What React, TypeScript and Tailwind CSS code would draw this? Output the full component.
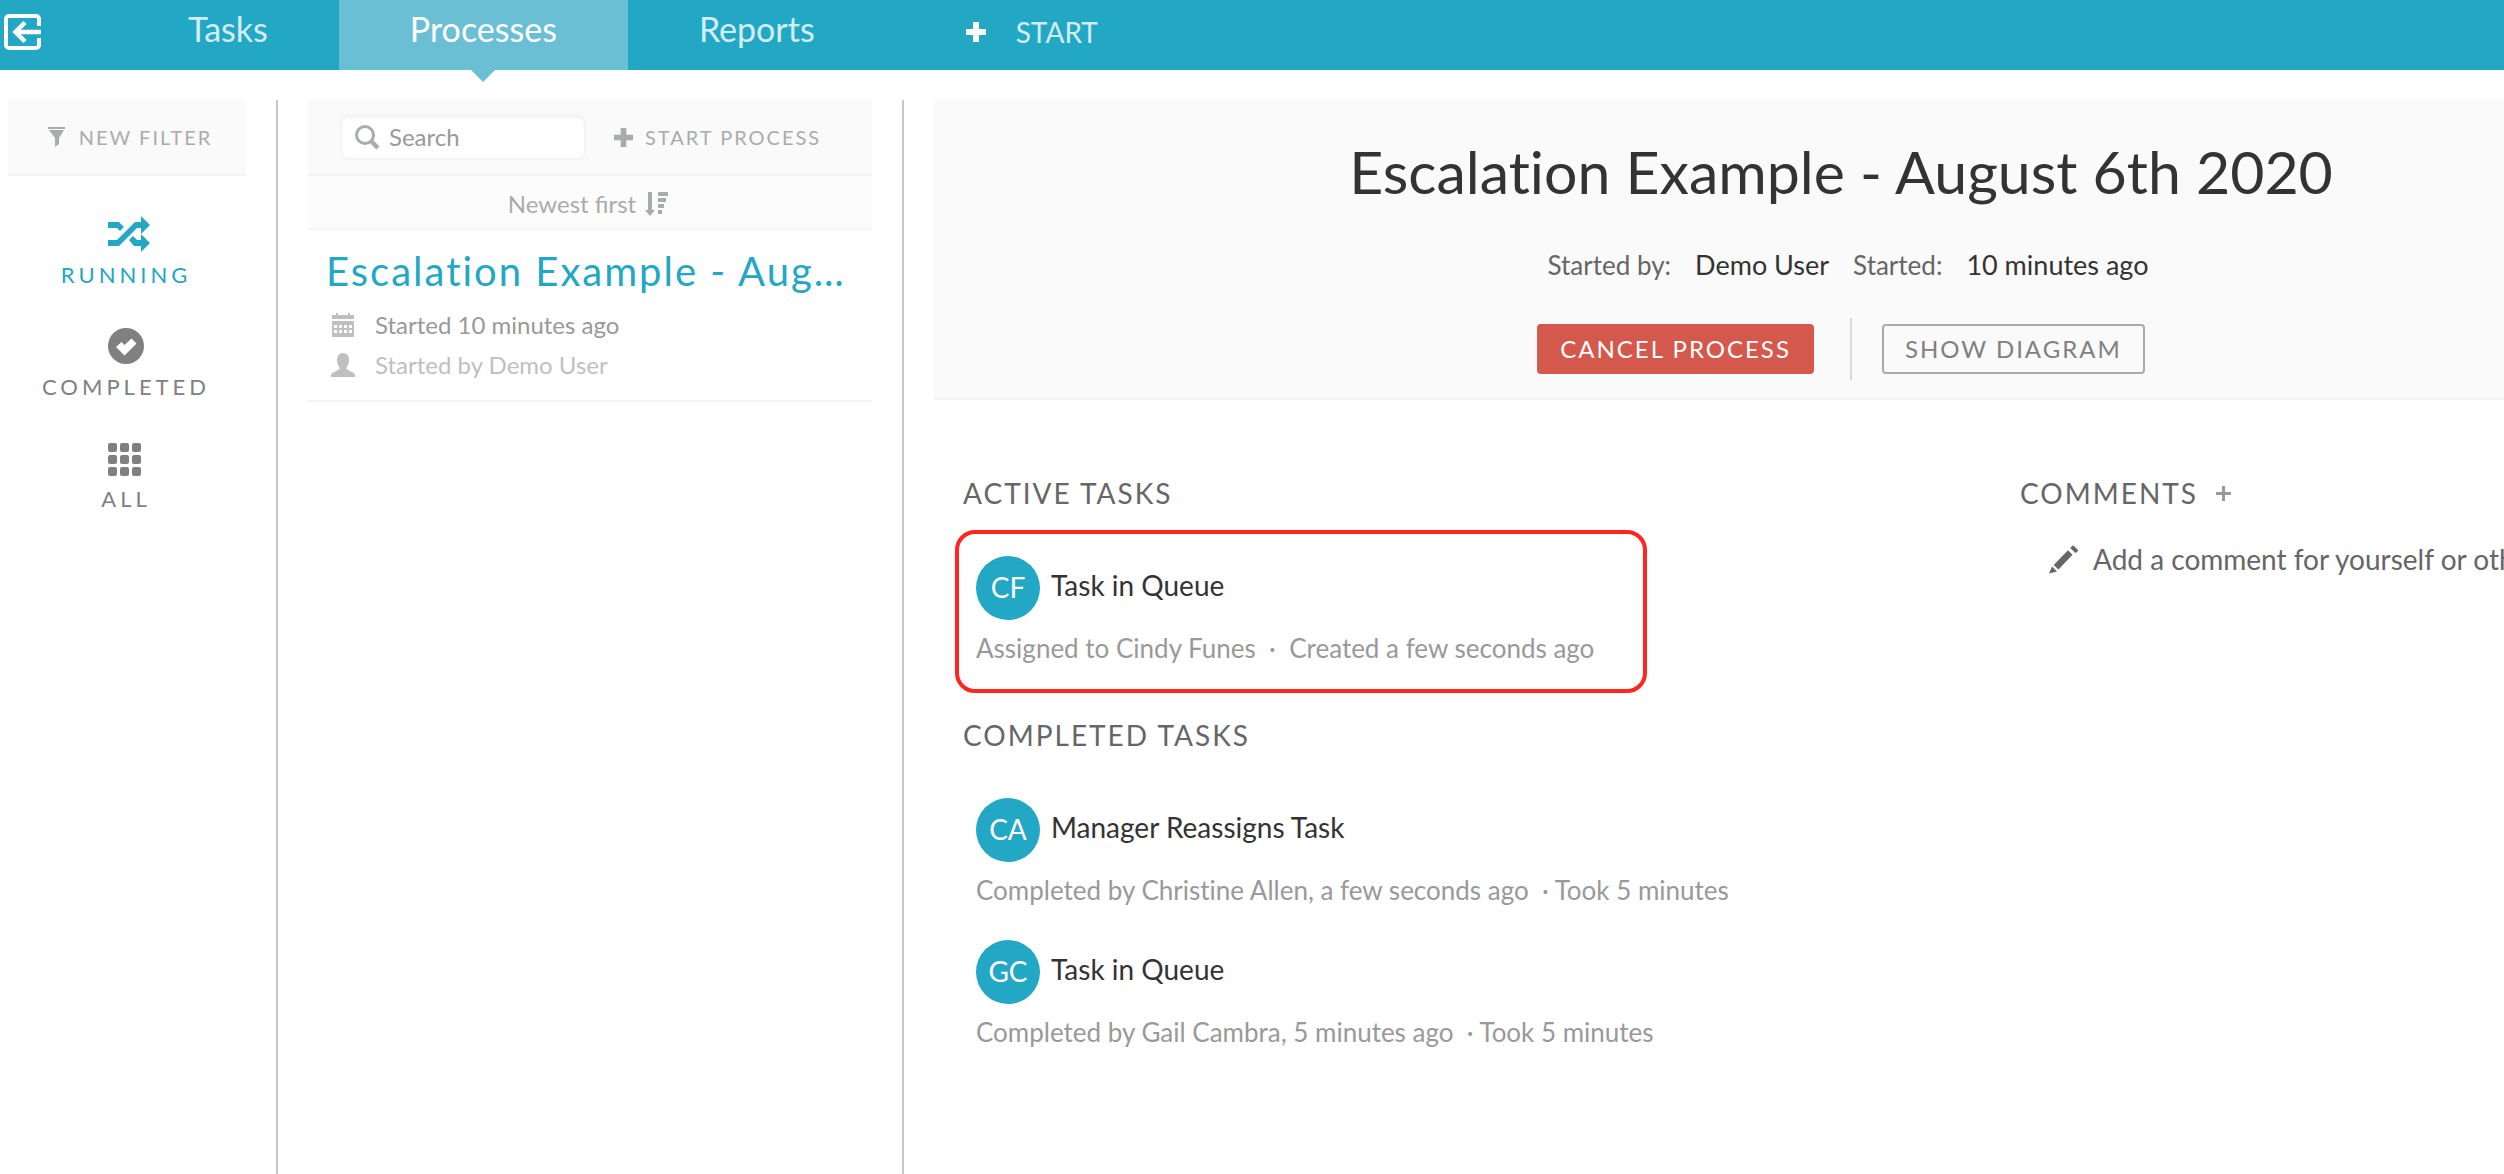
import type { ReactNode } from "react";

const plus = "M7 0h6v7h7v6h-7v7H7v-7H0V7h7z";

function PlusIcon({ className }: { className: string }) {
  return (
    <svg viewBox="0 0 20 20" className={className} fill="currentColor" aria-hidden="true">
      <path d={plus} />
    </svg>
  );
}

function Header() {
  return (
    <header className="flex h-[70px] bg-[#22a7c4] text-white">
      <button type="button" aria-label="Exit" className="w-[117px] shrink-0 pb-[6px] pl-[3px]">
        <svg viewBox="0 0 38 38" className="h-[38px] w-[38px]" fill="none" stroke="currentColor" strokeWidth="4" aria-hidden="true">
          <path d="M36 13V6a3 3 0 0 0-3-3H6a3 3 0 0 0-3 3v26a3 3 0 0 0 3 3h27a3 3 0 0 0 3-3v-7" />
          <path d="M38 19H13M22 9.500L12.500 19L22 28.500" strokeWidth="4.500" />
        </svg>
      </button>
      <nav className="flex text-[34px] leading-[58px]">
        <a href="#tasks" className="px-[71px] text-white/80">Tasks</a>
        <a href="#processes" aria-current="page" className="relative bg-[#6bbfd4] px-[71px]">
          Processes
          <svg viewBox="0 0 24 12" className="absolute top-full left-1/2 h-3 w-6 -translate-x-1/2" fill="#6bbfd4" aria-hidden="true">
            <path d="M0 0h24L12 12z" />
          </svg>
        </a>
        <a href="#reports" className="px-[71px] text-white/80">Reports</a>
      </nav>
      <button type="button" className="ml-20 flex items-center gap-[30px] pb-[6px] text-[28px]">
        <PlusIcon className="h-5 w-5" />
        <span className="text-white/80">START</span>
      </button>
    </header>
  );
}

function Filter({ label, active, children }: { label: string; active?: boolean; children: ReactNode }) {
  return (
    <li>
      <button
        type="button"
        className={`flex w-full flex-col items-center gap-[7px] pr-[2px] text-[22px] leading-8 tracking-[4px] ${active ? "text-[#22a7c4]" : "text-[#808080]"}`}
      >
        <svg viewBox="0 0 36 36" className="h-9 w-9 overflow-visible" fill="currentColor" aria-hidden="true">
          {children}
        </svg>
        {label}
      </button>
    </li>
  );
}

function Sidebar() {
  return (
    <aside className="w-[238px] shrink-0">
      <button
        type="button"
        className="flex h-[76px] w-full items-center justify-center gap-[14px] border-b-2 border-[#f4f4f4] bg-[#fafafa] pl-[6px] text-[20px] tracking-[2px] text-[#a9acac]"
      >
        <svg viewBox="0 0 17 20" className="h-5 w-[17px]" fill="currentColor" aria-hidden="true">
          <path d="M0 0h17v2H0zM1 3h15l-5 8v6l-4 3v-9z" />
        </svg>
        NEW FILTER
      </button>
      <ul className="flex flex-col gap-[37px] pt-10">
        <Filter label="RUNNING" active>
          <path d="M0 6h11l5 5-4 4-3-3H0zM0 24h9L27 6h6V0l9 9-9 9v-6h-4L11 30H0zM25 20l4 4h4v-6l9 9-9 9v-6h-7l-5-6z" />
        </Filter>
        <Filter label="COMPLETED">
          <path fillRule="evenodd" d="M18 0a18 18 0 1 1 0 36 18 18 0 0 1 0-36zM8 19l8.500 8.500L28.500 15.500l-5-5-7 6.500-3-3z" />
        </Filter>
        <Filter label="ALL">
          {[0, 12, 24].map((y) => [0, 12, 24].map((x) => <rect key={`${x}-${y}`} x={x} y={y + 3} width="9" height="9" rx="2" />))}
        </Filter>
      </ul>
    </aside>
  );
}

function ProcessList() {
  return (
    <section className="w-[564px] shrink-0">
      <div className="flex h-[76px] items-center gap-7 border-b-2 border-[#f4f4f4] bg-[#fafafa] pl-8 text-[#a9acac]">
        <label className="flex h-[46px] w-[246px] items-center gap-[9px] rounded-lg border-2 border-[#f4f4f4] bg-white pl-[13px] inset-shadow-[0_2px_2px_#f2f2f2]">
          <svg viewBox="0 0 25 25" className="h-[25px] w-[25px] shrink-0" fill="none" stroke="currentColor" aria-hidden="true">
            <circle cx="10" cy="10" r="8.500" strokeWidth="3" />
            <path d="M16 16l7 7" strokeWidth="4.500" />
          </svg>
          <input type="text" aria-label="Search" placeholder="Search" className="w-full min-w-0 text-[24px] outline-none placeholder:text-[#999]" />
        </label>
        <button type="button" className="flex items-center gap-3 text-[20px] tracking-[2px]">
          <PlusIcon className="h-[19px] w-[19px]" />
          START PROCESS
        </button>
      </div>
      <button type="button" className="flex h-[54px] w-full items-center justify-center gap-2 border-b-2 border-[#f4f4f4] bg-[#fcfcfc] pt-1 pr-1 text-[24px] text-[#a9acac]">
        Newest first
        <svg viewBox="0 0 24 24" className="h-6 w-6" fill="currentColor" aria-hidden="true">
          <path d="M4 0h4v18h3l-5 6-5-6h3zM14 0h10v4H14zM14 6h8v4h-8zM14 12h6v4h-6zM14 18h4v4h-4z" />
        </svg>
      </button>
      <article className="border-b-2 border-[#f4f4f4] px-[18px] pt-4 pb-[15px] text-[24px] leading-10">
        <h2 className="truncate text-[40px] leading-[50px] tracking-[2px] text-[#22a7c4]">Escalation Example - August 6th 2020</h2>
        <p className="mt-[9px] flex items-center gap-5 pl-[5px] text-[#999]">
          <svg viewBox="0 0 22 24" className="h-6 w-6 text-[#bfbfbf]" fill="currentColor" aria-hidden="true">
            <path fillRule="evenodd" d="M0 2h4V0h2v2h10V0h2v2h4v4H0zM0 8h22v16H0zM2 12v3h3v-3zM7 12v3h3v-3zM12 12v3h3v-3zM17 12v3h3v-3zM2 17v3h3v-3zM7 17v3h3v-3zM12 17v3h3v-3zM17 17v3h3v-3z" />
          </svg>
          Started 10 minutes ago
        </p>
        <p className="flex items-center gap-5 pl-[5px] text-[#bfbfbf]">
          <svg viewBox="0 0 24 24" className="h-6 w-6" fill="currentColor" aria-hidden="true">
            <path d="M12 0c4 0 6 3 6 7 0 3-1 6-3 8 1 3 9 4 9 7v2H0v-2c0-3 8-4 9-7-2-2-3-5-3-8 0-4 2-7 6-7z" />
          </svg>
          Started by Demo User
        </p>
      </article>
    </section>
  );
}

function Task({ initials, title, note }: { initials: string; title: string; note: string }) {
  return (
    <article>
      <div className="flex items-center gap-[11px]">
        <span className="flex h-16 w-16 items-center justify-center rounded-full bg-[#22a7c4] pb-[2px] text-[28px] text-white">{initials}</span>
        <h3 className="pb-[6px] text-[28px] text-[#333]">{title}</h3>
      </div>
      <p className="mt-[7px] text-[26px] leading-[42px] whitespace-pre text-[#999] [font-variant-ligatures:none]">{note}</p>
    </article>
  );
}

function Detail() {
  return (
    <main className="min-w-0 flex-1 overflow-hidden">
      <div className="min-w-[1816px]">
        <div className="flex h-[300px] flex-col items-center border-b-2 border-[#f4f4f4] bg-[#fafafa] pt-9 pr-[2px]">
          <h1 className="text-[59px] leading-[72px] text-[#333] [font-variant-ligatures:none]">Escalation Example - August 6th 2020</h1>
          <dl className="mt-[37px] flex items-baseline gap-6 pl-[14px] text-[27px] leading-10 text-[#333]">
            <dt className="text-[26px] text-[#666]">Started by:</dt>
            <dd>Demo User</dd>
            <dt className="text-[26px] text-[#666]">Started:</dt>
            <dd>10 minutes ago</dd>
          </dl>
          <div className="mt-[33px] flex items-center text-[24px] tracking-[2px]">
            <button type="button" className="h-[50px] rounded bg-[#d4594c] px-[23px] text-white">CANCEL PROCESS</button>
            <span className="mr-[30px] ml-9 h-[62px] w-[2px] bg-[#d9d9d9]" />
            <button type="button" className="h-[50px] rounded border-2 border-[#a9acac] px-[21px] text-[#808080]">SHOW DIAGRAM</button>
          </div>
        </div>
        <div className="flex pt-[73px] pl-[29px] text-[#666]">
          <section className="w-[1057px]">
            <h2 className="text-[28px] leading-10 tracking-[2px]">ACTIVE TASKS</h2>
            <div className="mt-[17px] -ml-2 w-[692px] rounded-[20px] border-4 border-[#ff2620] px-[17px] pt-[22px] pb-5">
              <Task initials="CF" title="Task in Queue" note="Assigned to Cindy Funes  ·  Created a few seconds ago" />
            </div>
            <h2 className="mt-[22px] text-[28px] leading-10 tracking-[2px]">COMPLETED TASKS</h2>
            <div className="mt-[43px] flex flex-col gap-[29px] pl-[13px]">
              <Task initials="CA" title="Manager Reassigns Task" note="Completed by Christine Allen, a few seconds ago  · Took 5 minutes" />
              <Task initials="GC" title="Task in Queue" note="Completed by Gail Cambra, 5 minutes ago  · Took 5 minutes" />
            </div>
          </section>
          <section className="flex-1">
            <div className="flex items-center gap-[18px]">
              <h2 className="text-[28px] leading-10 tracking-[2px]">COMMENTS</h2>
              <button type="button" aria-label="Add comment">
                <svg viewBox="0 0 15 15" className="h-[15px] w-[15px]" stroke="#999" strokeWidth="3" aria-hidden="true">
                  <path d="M7.500 0v15M0 7.500h15" />
                </svg>
              </button>
            </div>
            <button type="button" className="mt-[26px] flex items-center gap-[15px] pl-[29px] text-[28px] leading-10 whitespace-nowrap">
              <svg viewBox="0 0 29 29" className="h-[29px] w-[29px]" fill="currentColor" aria-hidden="true">
                <path d="M0 28.500L3 21.500l5 5zM4.700 20L19 5.300l4.500 4.400L9.500 24.500zM21.200 3L23 1q1-1 2 0l3.500 3.500q1 1 0 2L26.500 8z" />
              </svg>
              Add a comment for yourself or others
            </button>
          </section>
        </div>
      </div>
    </main>
  );
}

export default function App() {
  return (
    <div className="flex min-h-screen flex-col overflow-hidden bg-white font-['Lato',sans-serif]">
      <Header />
      <div className="flex flex-1 gap-[30px] pt-[30px] pl-2">
        <Sidebar />
        <div className="w-[2px] shrink-0 bg-[#c8c8c8]" />
        <ProcessList />
        <div className="w-[2px] shrink-0 bg-[#c8c8c8]" />
        <Detail />
      </div>
    </div>
  );
}
